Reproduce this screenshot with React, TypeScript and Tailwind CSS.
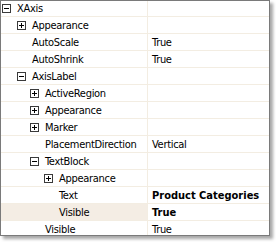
import React from "react";

type Row = {
  label: string;
  level: number;
  box?: "plus" | "minus";
  value?: string;
  bold?: boolean;
  selected?: boolean;
};

const rows: Row[] = [
  { label: "XAxis", level: 0, box: "minus" },
  { label: "Appearance", level: 1, box: "plus" },
  { label: "AutoScale", level: 1, value: "True" },
  { label: "AutoShrink", level: 1, value: "True" },
  { label: "AxisLabel", level: 1, box: "minus" },
  { label: "ActiveRegion", level: 2, box: "plus" },
  { label: "Appearance", level: 2, box: "plus" },
  { label: "Marker", level: 2, box: "plus" },
  { label: "PlacementDirection", level: 2, value: "Vertical" },
  { label: "TextBlock", level: 2, box: "minus" },
  { label: "Appearance", level: 3, box: "plus" },
  { label: "Text", level: 3, value: "Product Categories", bold: true },
  { label: "Visible", level: 3, value: "True", bold: true, selected: true },
  { label: "Visible", level: 2, value: "True" },
];

const indentClass = ["pl-[1px]", "pl-[16px]", "pl-[29px]", "pl-[43px]"];

function Box({ kind }: { kind: "plus" | "minus" }) {
  return (
    <svg width="9" height="9" viewBox="0 0 9 9" className="shrink-0 block">
      <rect x="0.5" y="0.5" width="8" height="8" fill="#fff" stroke="#3a3a3a" />
      <line x1="2" y1="4.5" x2="7" y2="4.5" stroke="#000" />
      {kind === "plus" && <line x1="4.5" y1="2" x2="4.5" y2="7" stroke="#000" />}
    </svg>
  );
}

export default function App() {
  return (
    <div
      className="w-[276px] h-[242px] bg-white relative"
      style={{ fontFamily: '"DejaVu Sans Condensed", "DejaVu Sans", sans-serif' }}
    >
      <div className="w-[270px] h-[236px] border border-[#7a7a7a] bg-white overflow-hidden shadow-[3px_3px_3px_rgba(0,0,0,0.35)] flex flex-col">
        {rows.map((r, i) => (
          <div
            key={i}
            className={`flex shrink-0 border-b border-[#f3ede2] ${i === 0 ? "h-[16px]" : "h-[17px]"} ${
              r.selected ? "bg-[#f4ede4]" : ""
            }`}
          >
            <div
              className={`w-[147px] shrink-0 border-r border-[#f3ede2] flex items-center gap-[6px] text-[11px] leading-none text-black ${indentClass[r.level]}`}
            >
              {r.box ? <Box kind={r.box} /> : <span className="w-[9px] shrink-0" />}
              <span className="whitespace-nowrap tracking-[-0.3px]">{r.label}</span>
            </div>
            <div
              className={`flex-1 flex items-center pl-[4px] text-[11px] leading-none text-black whitespace-nowrap bg-white ${
                r.bold ? "font-bold" : "tracking-[-0.3px]"
              }`}
            >
              {r.value ?? ""}
            </div>
          </div>
        ))}
      </div>
    </div>
  );
}
